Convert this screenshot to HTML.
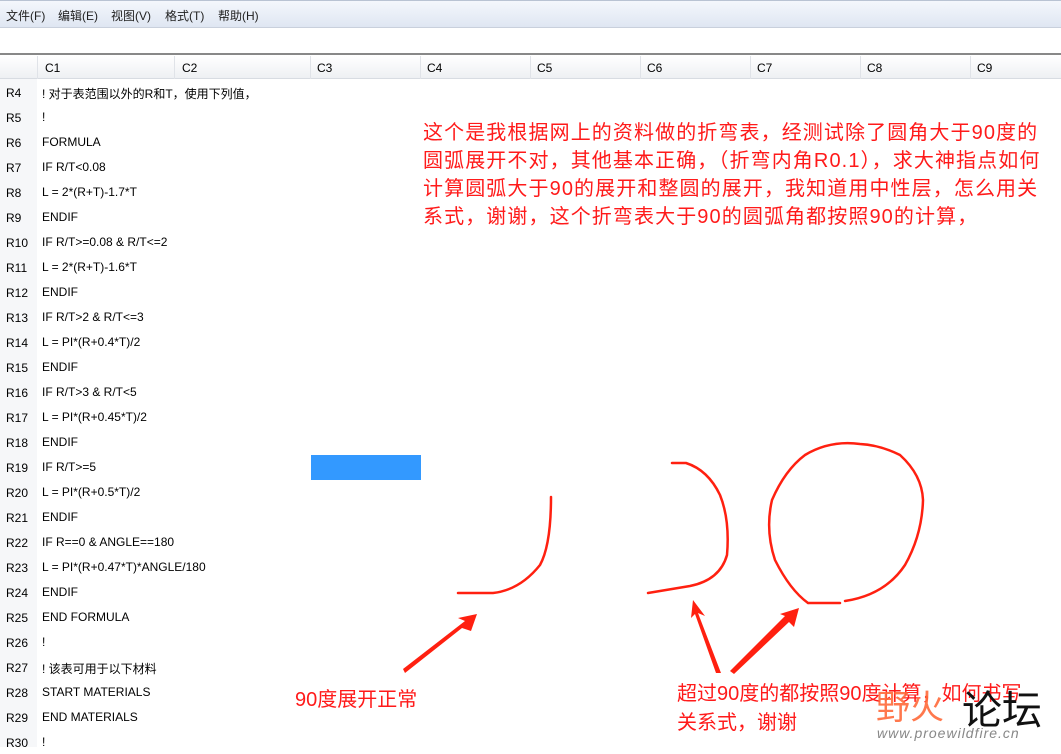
<!DOCTYPE html>
<html><head><meta charset="utf-8"><style>
*{margin:0;padding:0;box-sizing:border-box}
body{width:1061px;height:747px;overflow:hidden;background:#fff;position:relative;font-family:"Liberation Sans","Noto Sans CJK SC",sans-serif;font-size:12px;color:#000}
.menu{position:absolute;left:0;top:0;width:1061px;height:28px;background:linear-gradient(#f4f7fc,#dfe6f2);border-top:1px solid #b9c3d3;border-bottom:1px solid #c9d0dc}
.menu span{position:absolute;top:6px;font-size:12px;color:#222}
.fbar{position:absolute;left:0;top:28px;width:1061px;height:27px;background:#fff;border-bottom:2px solid #888}
.hdr{position:absolute;left:0;top:56px;width:1061px;height:23px;background:linear-gradient(#fff,#eef0f3);border-bottom:1px solid #d8dce2}
.hdr span{position:absolute;top:5px;font-size:12px}
.hdr i{position:absolute;top:0;width:1px;height:23px;background:#e0e3e8}
.rh{position:absolute;left:0;width:37px;height:25px;font-size:12px;padding:7px 0 0 6px}
.rowhead{position:absolute;left:0;top:79px;width:37px;height:668px;background:#f6f7f9}
.c{position:absolute;left:42px;font-size:12px;white-space:nowrap}
.red{position:absolute;color:#ff1a1a;font-size:20px;white-space:nowrap;line-height:28px}
</style></head><body>
<div class="menu">
<span style="left:6px">文件(F)</span><span style="left:58px">编辑(E)</span><span style="left:111px">视图(V)</span><span style="left:165px">格式(T)</span><span style="left:218px">帮助(H)</span>
</div>
<div class="fbar"></div>
<div class="hdr">
<i style="left:37px"></i><i style="left:174px"></i><i style="left:310px"></i><i style="left:420px"></i><i style="left:530px"></i><i style="left:640px"></i><i style="left:750px"></i><i style="left:860px"></i><i style="left:970px"></i>
<span style="left:45px">C1</span><span style="left:182px">C2</span><span style="left:317px">C3</span><span style="left:427px">C4</span><span style="left:537px">C5</span><span style="left:647px">C6</span><span style="left:757px">C7</span><span style="left:867px">C8</span><span style="left:977px">C9</span>
</div>
<div class="rowhead"></div>
<div style="position:absolute;left:311px;top:455px;width:110px;height:25px;background:#3399ff"></div>
<div id="rows"></div>
<div class="red" style="left:423px;top:119px;letter-spacing:1.1px">这个是我根据网上的资料做的折弯表，经测试除了圆角大于90度的<br>圆弧展开不对，其他基本正确，（折弯内角R0.1），求大神指点如何<br>计算圆弧大于90的展开和整圆的展开，我知道用中性层，怎么用关<br>系式，谢谢，这个折弯表大于90的圆弧角都按照90的计算，</div>
<div class="red" style="left:295px;top:686px">90度展开正常</div>
<div class="red" style="left:677px;top:680px;line-height:29px">超过90度的都按照90度计算，如何书写<br>关系式，谢谢</div>
<div style="position:absolute;left:876px;top:680px;font-size:34px;color:#ff6a3a;opacity:.9">野火</div>
<div style="position:absolute;left:962px;top:678px;font-size:40px;color:#111">论坛</div>
<div style="position:absolute;left:877px;top:725px;font-size:14px;color:#888;font-style:italic;letter-spacing:1px">www.proewildfire.cn</div>
<svg width="1061" height="747" style="position:absolute;left:0;top:0" fill="none" stroke="#ff2010" stroke-width="2.5" stroke-linecap="round">
<path d="M458 593 L493 593 Q520 590 540 565 Q551 545 551 497"/>
<path d="M672 463 L686 463 Q708 470 720 495 Q730 520 727 555 Q720 580 690 586 L648 593"/>
<path d="M808 603 L840 603 M845 601 Q885 595 905 565 Q922 535 923 500 Q922 475 900 455 Q880 445 860 444 Q830 440 805 455 Q785 470 772 500 Q765 530 775 560 Q790 590 808 603"/>
<g fill="#ff2010" stroke="none">
<polygon points="405,673 462,628 471,631 477,614 458,618 465,621 403,669"/>
<polygon points="721,673 698,613 705,616 693,600 691,618 695,614 716,673"/>
<polygon points="734,674 789,622 794,627 799,608 780,614 785,616 730,671"/>
</g>
</svg>
<script>
var d=[["R4","! 对于表范围以外的R和T，使用下列值，"],["R5","!"],["R6","FORMULA"],["R7","IF R/T<0.08"],["R8","L = 2*(R+T)-1.7*T"],["R9","ENDIF"],["R10","IF R/T>=0.08 & R/T<=2"],["R11","L = 2*(R+T)-1.6*T"],["R12","ENDIF"],["R13","IF R/T>2 & R/T<=3"],["R14","L = PI*(R+0.4*T)/2"],["R15","ENDIF"],["R16","IF R/T>3 & R/T<5"],["R17","L = PI*(R+0.45*T)/2"],["R18","ENDIF"],["R19","IF R/T>=5"],["R20","L = PI*(R+0.5*T)/2"],["R21","ENDIF"],["R22","IF R==0 & ANGLE==180"],["R23","L = PI*(R+0.47*T)*ANGLE/180"],["R24","ENDIF"],["R25","END FORMULA"],["R26","!"],["R27","! 该表可用于以下材料"],["R28","START MATERIALS"],["R29","END MATERIALS"],["R30","!"]];
var h="";d.forEach(function(r,i){var y=79+i*25;h+='<div class="rh" style="top:'+y+'px">'+r[0]+'</div><div class="c" style="top:'+(y+6)+'px">'+r[1].replace(/&/g,"&amp;").replace(/</g,"&lt;")+'</div>';});
document.getElementById("rows").innerHTML=h;
</script>
</body></html>
